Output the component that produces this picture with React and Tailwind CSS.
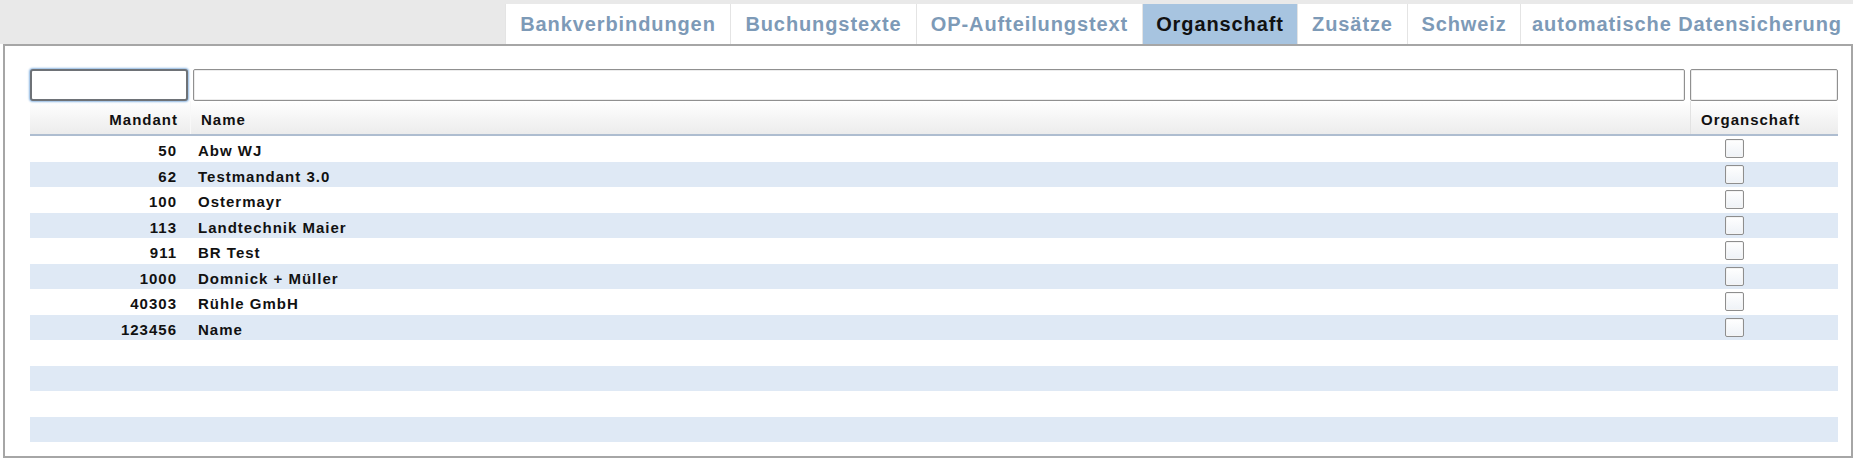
import React from "react";

const tabs = [
  { label: "Bankverbindungen", w: "w-[225px]" },
  { label: "Buchungstexte", w: "w-[186px]" },
  { label: "OP-Aufteilungstext", w: "w-[226px]" },
  { label: "Organschaft", w: "w-[155px]", active: true },
  { label: "Zusätze", w: "w-[110px]" },
  { label: "Schweiz", w: "w-[113px]" },
  { label: "automatische Datensicherung", w: "w-[333px]" },
];

const mandanten = [
  { nr: "50", name: "Abw WJ" },
  { nr: "62", name: "Testmandant 3.0" },
  { nr: "100", name: "Ostermayr" },
  { nr: "113", name: "Landtechnik Maier" },
  { nr: "911", name: "BR Test" },
  { nr: "1000", name: "Domnick + Müller" },
  { nr: "40303", name: "Rühle GmbH" },
  { nr: "123456", name: "Name" },
];

const Checkbox = () => (
  <div className="w-[19px] h-[19px] rounded-[2px] border border-[#8e8e8e] bg-gradient-to-b from-white to-[#eef2f7] shadow-[inset_0_0_0_1px_#f4f4f4]"></div>
);

const App = () => {
  const rows = [...mandanten, ...Array(4).fill(null)];

  return (
    <div className="w-[1861px] h-[464px] bg-white font-['Liberation_Sans',Arial,sans-serif] overflow-hidden">
      <div className="w-[1853px]">
        {/* Tab strip */}
        <div className="h-[44px] bg-[#e9e9e9] flex justify-end pt-[4px]">
          {tabs.map((t) => (
            <div
              key={t.label}
              className={`${t.w} h-[40px] flex items-center justify-center text-[20px] font-bold tracking-[0.9px] border-l border-[#e4e4e4] ${
                t.active ? "bg-[#a7c4e0] text-[#111]" : "bg-white text-[#7d9ab7]"
              }`}
            >
              {t.label}
            </div>
          ))}
        </div>

        {/* Panel */}
        <div className="ml-[3px] h-[414px] border-2 border-[#a6a6a6] bg-white pl-[25px] pr-[13px] pt-[23px]">
          {/* Filter inputs */}
          <div className="flex gap-[5px] h-[32px]">
            <div className="w-[158px] rounded-[3px] border-2 border-[#6e7277] shadow-[0_0_2px_1px_#8fb8e2] bg-white"></div>
            <div className="flex-1 rounded-[2px] border border-[#909090] shadow-[inset_0_0_0_1px_#ececec] bg-white"></div>
            <div className="w-[148px] rounded-[2px] border border-[#909090] shadow-[inset_0_0_0_1px_#ececec] bg-white"></div>
          </div>

          {/* Header */}
          <div className="flex h-[35px] border-b-2 border-[#aebdd0] bg-gradient-to-b from-white to-[#ececec] text-[15px] font-bold tracking-[1px] text-[#111] leading-[18px]">
            <div className="w-[160px] pt-[10px] pr-[12px] text-right">Mandant</div>
            <div className="flex-1 pt-[10px] pl-[10px] border-l border-[#f8f8f8]">Name</div>
            <div className="w-[148px] pt-[10px] pl-[10px] border-l border-[#e2e2e2]">Organschaft</div>
          </div>

          {/* Rows */}
          {rows.map((r, i) => (
            <div
              key={i}
              className={`flex h-[25.5px] text-[15px] font-bold tracking-[1px] text-[#111] leading-[19px] ${
                i % 2 === 1 ? "bg-[#dfe9f5]" : "bg-white"
              }`}
            >
              <div className="w-[160px] pt-[5px] pr-[13px] text-right">{r ? r.nr : ""}</div>
              <div className="flex-1 pt-[5px] pl-[8px]">{r ? r.name : ""}</div>
              <div className="w-[148px] pl-[35px] pt-[3px]">{r && <Checkbox />}</div>
            </div>
          ))}
        </div>
      </div>
    </div>
  );
};

export default App;
